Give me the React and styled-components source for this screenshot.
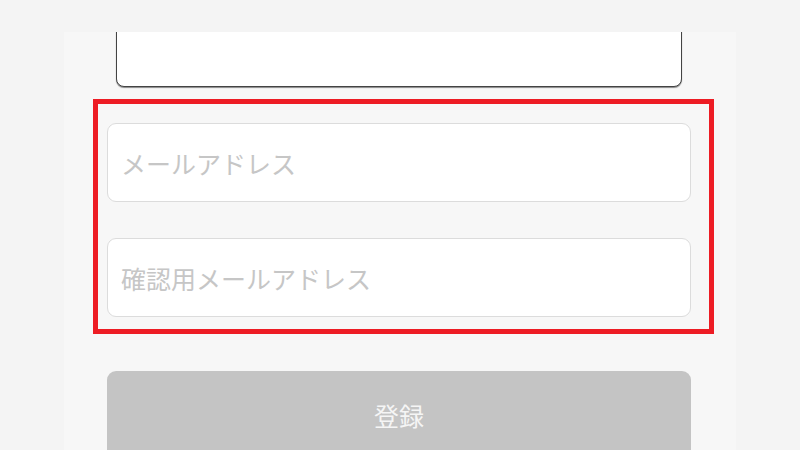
import styled, { createGlobalStyle } from "styled-components"

const GlobalStyle = createGlobalStyle`
    html, body {
        margin: 0;
        padding: 0;
        background: #f4f4f4;
        font-family: "Noto Sans CJK JP", "Noto Sans", sans-serif;
    }
`

const App = () => {
    return (
        <>
            <GlobalStyle />
            <Page>
                <Panel>
                    <Memo readOnly />
                    <FieldGroup>
                        <Field type="email" placeholder="メールアドレス" />
                        <Field type="email" placeholder="確認用メールアドレス" />
                    </FieldGroup>
                    <SubmitButton disabled>登録</SubmitButton>
                </Panel>
            </Page>
        </>
    )
}

export default App

const Page = styled.div`
    width: 800px;
    height: 450px;
    padding-top: 32px;
    box-sizing: border-box;
    overflow: hidden;
`

const Panel = styled.div`
    width: 672px;
    height: 418px;
    margin: 0 auto;
    background: #f7f7f7;
    overflow: hidden;
    display: flex;
    flex-direction: column;
`

const Memo = styled.textarea`
    display: block;
    box-sizing: border-box;
    width: 566px;
    height: 95px;
    margin: -40px 0 0 52px;
    border: 1px solid #444;
    border-radius: 8px;
    box-shadow: 0 1px 1px rgba(0, 0, 0, 0.45);
    background: #fff;
    resize: none;
    outline: none;
    flex-shrink: 0;
`

const FieldGroup = styled.div`
    margin: 12px 0 0 29px;
    width: 621px;
    box-sizing: border-box;
    border: 5px solid #ed1c24;
    padding: 19px 18px 12px 9px;
    display: flex;
    flex-direction: column;
    gap: 36px;
    flex-shrink: 0;
`

const Field = styled.input`
    box-sizing: border-box;
    width: 584px;
    height: 79px;
    border: 1px solid #dcdcdc;
    border-radius: 9px;
    background: #fff;
    padding: 0 13px;
    font-family: "Noto Sans CJK JP", sans-serif;
    font-size: 25px;
    color: #333;
    outline: none;

    &::placeholder {
        color: #c6c6c6;
    }
`

const SubmitButton = styled.button`
    margin: 37px 0 0 43px;
    width: 584px;
    height: 90px;
    flex-shrink: 0;
    border: none;
    border-radius: 9px;
    background: #c4c4c4;
    color: #f5f5f5;
    font-family: "Noto Sans CJK JP", sans-serif;
    font-size: 25px;
    padding: 0 0 2px;
`
